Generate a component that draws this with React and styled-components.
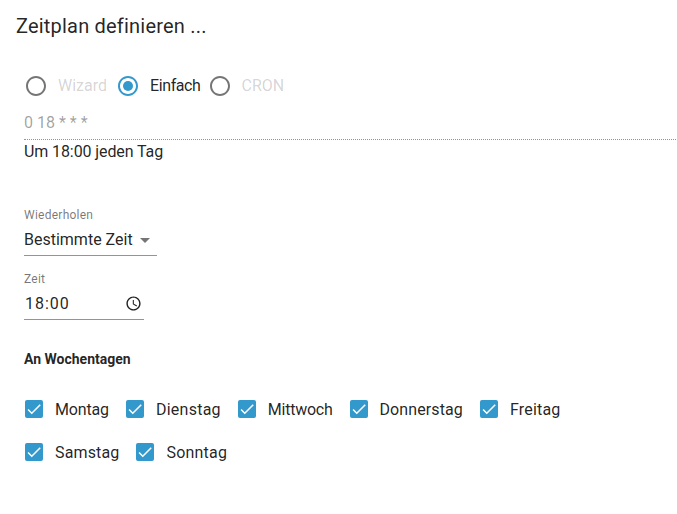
import React from 'react'
import styled, { createGlobalStyle } from 'styled-components'

const GlobalStyle = createGlobalStyle`
  html, body {
    margin: 0;
    padding: 0;
    background: #fff;
    font-family: Roboto, "Liberation Sans", Arial, sans-serif;
    color: rgba(0, 0, 0, 0.87);
  }
`

const Page = styled.div`
  width: 677px;
  height: 514px;
  overflow: hidden;
  box-sizing: border-box;
  padding-top: 13px;
`

const Title = styled.h2`
  margin: 0 0 0 16px;
  font-size: 20px;
  line-height: 26px;
  font-weight: 400;
  letter-spacing: 0.2px;
`

const Content = styled.div`
  padding-left: 24px;
`

const RadioRow = styled.div`
  display: flex;
  align-items: center;
  height: 42px;
  margin-top: 26px;
`

const RadioOption = styled.label`
  display: flex;
  align-items: center;
  margin-right: ${p => p.$gap}px;
`

const RadioBox = styled.span`
  width: 24px;
  height: 24px;
  padding-right: 10px;
  display: flex;
  color: ${p => (p.$checked ? '#3399cc' : 'rgba(0, 0, 0, 0.54)')};
`

const RadioText = styled.span`
  font-size: 16px;
  line-height: 24px;
  letter-spacing: ${p => p.$track || 0}px;
  color: ${p => (p.$disabled ? 'rgba(0, 0, 0, 0.18)' : 'rgba(0, 0, 0, 0.87)')};
`

const CronInput = styled.div`
  margin-top: 3px;
  margin-right: 1px;
  height: 30px;
  box-sizing: border-box;
  padding-top: 3px;
  font-size: 16px;
  line-height: 20px;
  color: rgba(0, 0, 0, 0.38);
  border-bottom: 1px dotted rgba(0, 0, 0, 0.42);
`

const CronText = styled.div`
  font-size: 16px;
  line-height: 20px;
  margin-top: 2px;
  letter-spacing: -0.1px;
`

const Field = styled.div`
  display: flex;
  flex-direction: column;
  width: ${p => p.$width}px;
  margin-top: ${p => p.$top}px;
`

const FieldLabel = styled.span`
  font-size: 12px;
  line-height: 14px;
  letter-spacing: 0.25px;
  color: rgba(0, 0, 0, 0.54);
`

const FieldValue = styled.div`
  display: flex;
  align-items: center;
  justify-content: space-between;
  height: 32px;
  box-sizing: border-box;
  margin-top: 2px;
  font-size: 16px;
  border-bottom: 1px solid rgba(0, 0, 0, 0.42);
`

const TimeValue = styled.span`
  padding-left: 1px;
  letter-spacing: 1px;
`

const ClockSlot = styled.span`
  display: flex;
  margin-right: 2px;
`

const Heading = styled.div`
  margin-top: 32px;
  font-size: 14px;
  line-height: 14px;
  font-weight: 700;
`

const DayList = styled.div`
  display: flex;
  flex-wrap: wrap;
  margin-top: 27px;
  row-gap: 11px;
  width: 560px;
`

const Day = styled.label`
  display: flex;
  align-items: center;
  height: 32px;
  margin-right: 16px;
  font-size: 16px;
  letter-spacing: ${p => p.$track}px;
`

const CheckBox = styled.span`
  width: 18px;
  height: 18px;
  margin: 0 12px 0 1px;
  border-radius: 2px;
  background: #3399cc;
  display: flex;
  align-items: center;
  justify-content: center;
`

const Caret = styled.span`
  width: 0;
  height: 0;
  margin: 2px 7px 0 0;
  border-left: 5px solid transparent;
  border-right: 5px solid transparent;
  border-top: 5px solid rgba(0, 0, 0, 0.54);
`

const RadioIcon = ({ checked }) => (
  <svg width="24" height="24" viewBox="0 0 24 24" fill="currentColor">
    <path d="M12 2C6.48 2 2 6.48 2 12s4.48 10 10 10 10-4.48 10-10S17.52 2 12 2zm0 18c-4.42 0-8-3.58-8-8s3.58-8 8-8 8 3.58 8 8-3.58 8-8 8z" />
    {checked && <circle cx="12" cy="12" r="5" />}
  </svg>
)

const ClockIcon = () => (
  <svg width="17" height="17" viewBox="0 0 24 24" fill="rgba(0, 0, 0, 0.87)">
    <path d="M11.99 2C6.47 2 2 6.48 2 12s4.47 10 9.99 10C17.52 22 22 17.52 22 12S17.52 2 11.99 2zM12 20c-4.42 0-8-3.58-8-8s3.58-8 8-8 8 3.58 8 8-3.58 8-8 8z" />
    <path d="M12.5 7H11v6l5.25 3.15.75-1.23-4.5-2.67z" />
  </svg>
)

const CheckIcon = () => (
  <svg width="18" height="18" viewBox="0 0 24 24" fill="#fff">
    <path d="M9 16.17L4.83 12l-1.42 1.41L9 19 21 7l-1.41-1.41z" />
  </svg>
)

const days = [
  { name: 'Montag', track: -0.15 },
  { name: 'Dienstag', track: 0.25 },
  { name: 'Mittwoch', track: -0.25 },
  { name: 'Donnerstag', track: 0.1 },
  { name: 'Freitag', track: 0.2 },
  { name: 'Samstag', track: 0.15 },
  { name: 'Sonntag', track: 0.2 },
]

export default function App() {
  return (
    <Page>
      <GlobalStyle />
      <Title>Zeitplan definieren ...</Title>
      <Content>
        <RadioRow>
          <RadioOption $gap={9}>
            <RadioBox><RadioIcon /></RadioBox>
            <RadioText $disabled>Wizard</RadioText>
          </RadioOption>
          <RadioOption $gap={7}>
            <RadioBox $checked><RadioIcon checked /></RadioBox>
            <RadioText $track={-0.4}>Einfach</RadioText>
          </RadioOption>
          <RadioOption $gap={0}>
            <RadioBox><RadioIcon /></RadioBox>
            <RadioText $disabled>CRON</RadioText>
          </RadioOption>
        </RadioRow>
        <CronInput>0 18 * * *</CronInput>
        <CronText>Um 18:00 jeden Tag</CronText>

        <Field $width={133} $top={46}>
          <FieldLabel>Wiederholen</FieldLabel>
          <FieldValue>
            Bestimmte Zeit
            <Caret />
          </FieldValue>
        </Field>

        <Field $width={120} $top={16}>
          <FieldLabel>Zeit</FieldLabel>
          <FieldValue>
            <TimeValue>18:00</TimeValue>
            <ClockSlot><ClockIcon /></ClockSlot>
          </FieldValue>
        </Field>

        <Heading>An Wochentagen</Heading>

        <DayList>
          {days.map(day => (
            <Day key={day.name} $track={day.track}>
              <CheckBox><CheckIcon /></CheckBox>
              {day.name}
            </Day>
          ))}
        </DayList>
      </Content>
    </Page>
  )
}
